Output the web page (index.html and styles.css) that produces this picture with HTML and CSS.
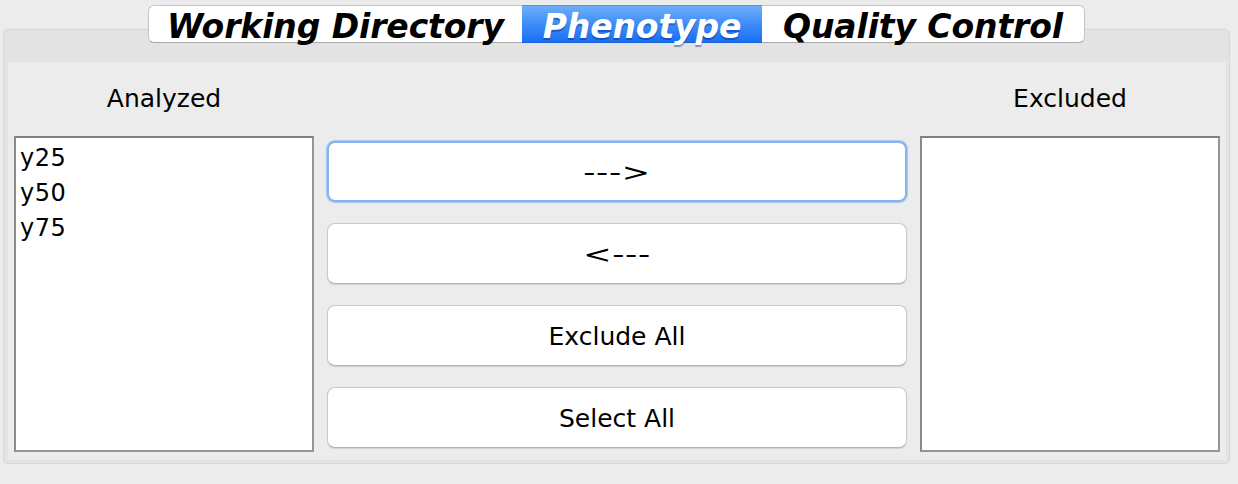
FILE: index.html
```html
<!DOCTYPE html>
<html>
<head>
<meta charset="utf-8">
<link rel="stylesheet" href="styles.css">
</head>
<body>
<div class="window">
  <div class="tabs">
    <div class="tab first">Working Directory</div>
    <div class="tab selected">Phenotype</div>
    <div class="tab last">Quality Control</div>
  </div>
  <div class="panel">
    <div class="content">
      <div class="col side">
        <div class="label">Analyzed</div>
        <div class="list">
          <div class="item">y25</div>
          <div class="item">y50</div>
          <div class="item">y75</div>
        </div>
      </div>
      <div class="col middle">
        <div class="btn focused"><span class="arrow">---&gt;</span></div>
        <div class="btn"><span class="arrow">&lt;---</span></div>
        <div class="btn">Exclude All</div>
        <div class="btn">Select All</div>
      </div>
      <div class="col side">
        <div class="label">Excluded</div>
        <div class="list"></div>
      </div>
    </div>
  </div>
</div>
</body>
</html>
```
FILE: styles.css
```css
html, body {
  margin: 0;
  padding: 0;
  background: #ececec;
  font-family: "DejaVu Sans", "Liberation Sans", sans-serif;
  color: #000;
}

.window {
  width: 1238px;
  height: 484px;
  padding: 5px 8px 0 3px;
  box-sizing: border-box;
}

.tabs {
  display: flex;
  justify-content: center;
  height: 38px;
  margin-bottom: -14px;
  position: relative;
  z-index: 2;
}

.tab {
  height: 38px;
  box-sizing: border-box;
  display: flex;
  align-items: center;
  justify-content: center;
  font-weight: bold;
  font-style: italic;
  font-size: 33px;
  background: #fff;
  border-top: 1px solid #c4c4c4;
  border-bottom: 1px solid #a8a8a8;
  padding: 4px 18px 0 18px;
  line-height: 1;
  letter-spacing: -0.1px;
}

.tab.first {
  width: 374px;
  border-left: 1px solid #c4c4c4;
  border-radius: 6px 0 0 6px;
}

.tab.last {
  width: 323px;
  border-right: 1px solid #c4c4c4;
  border-radius: 0 6px 6px 0;
}

.tab.selected {
  width: 240px;
  color: #fff;
  background: linear-gradient(#6eaef9, #3d8df8 50%, #1a70f5);
  border-top-color: #4f94f2;
  border-bottom-color: #1563d8;
  text-shadow: 0 2px 1px rgba(0, 40, 120, 0.45);
}

.panel {
  position: relative;
  z-index: 1;
  height: 435px;
  box-sizing: border-box;
  background: #e3e3e3;
  border: 1px solid #d8d8d8;
  border-radius: 5px;
  padding: 32px 3px 2px 4px;
}

.content {
  height: 398px;
  box-sizing: border-box;
  background: #ececec;
  display: grid;
  grid-template-columns: 300px 580px 300px;
  column-gap: 13px;
  padding: 0 6px 8px 6px;
}

.col {
  display: flex;
  flex-direction: column;
}

.label {
  height: 74px;
  line-height: 74px;
  text-align: center;
  font-size: 25px;
}

.list {
  flex: 1;
  background: #fff;
  border: 2px solid #959595;
  border-top-color: #808080;
  border-left-color: #8a8a8a;
  padding: 3px 4px;
}

.item {
  font-size: 24px;
  line-height: 35px;
  letter-spacing: 0.5px;
}

.middle {
  padding-top: 79px;
  gap: 21px;
}

.btn {
  height: 61px;
  box-sizing: border-box;
  background: #fff;
  border: 1px solid #c9c9c9;
  border-bottom-color: #b3b3b3;
  border-radius: 8px;
  box-shadow: 0 1px 1px rgba(0, 0, 0, 0.12);
  display: flex;
  align-items: center;
  justify-content: center;
  font-size: 25px;
  padding-top: 1px;
}

.arrow {
  display: inline-block;
  transform: scaleX(1.35);
  letter-spacing: 0.5px;
}

.btn.focused {
  border: 2px solid #86b5ee;
  box-shadow: 0 0 1px 1px rgba(120, 170, 240, 0.6);
}
```
